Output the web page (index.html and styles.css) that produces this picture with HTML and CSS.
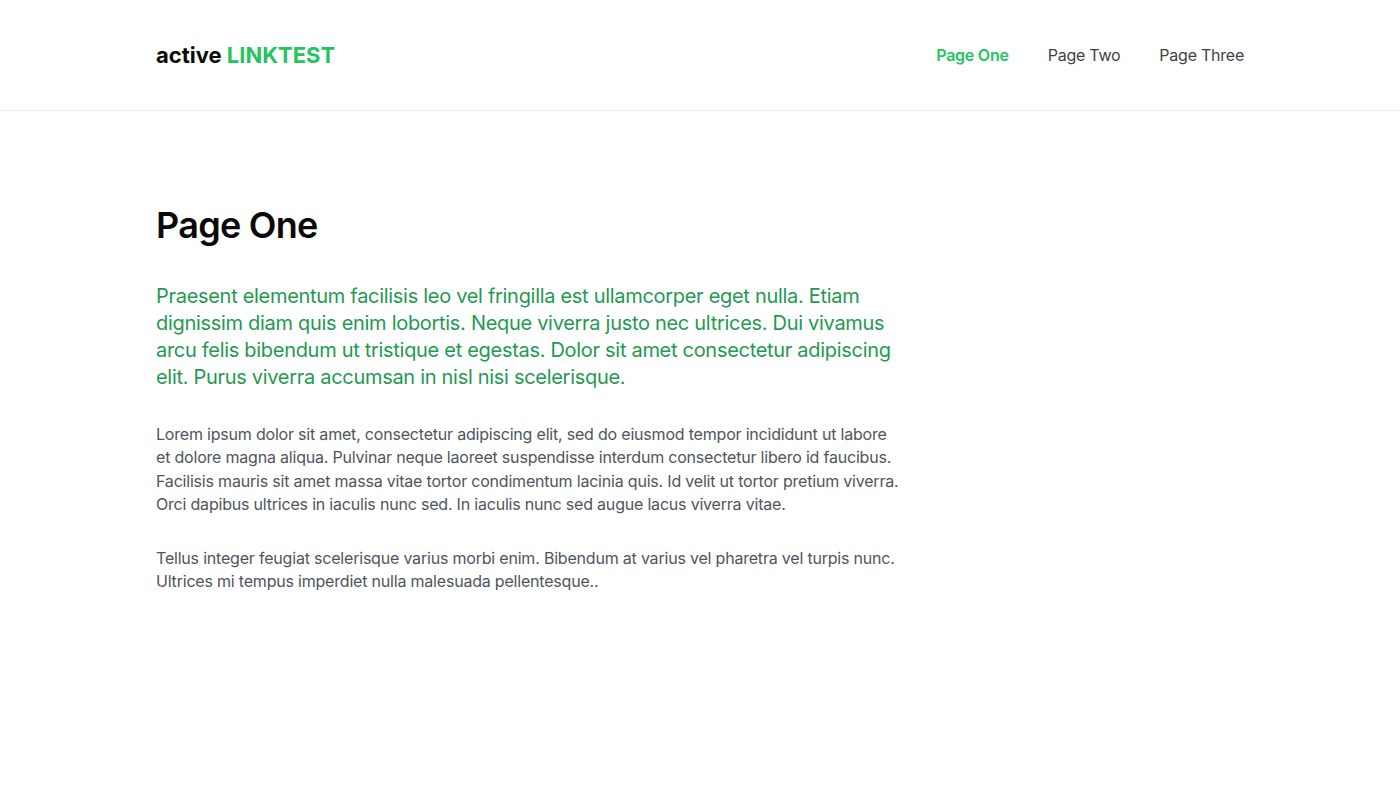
FILE: index.html
```html
<!DOCTYPE html>
<html lang="en">
<head>
<meta charset="utf-8">
<title>active LINKTEST</title>
<link rel="stylesheet" href="styles.css">
</head>
<body>
<header class="site-header">
  <div class="container header-inner">
    <a class="logo" href="#">active <span class="logo-accent">LINKTEST</span></a>
    <nav class="nav">
      <a class="nav-link is-active" href="#">Page One</a>
      <a class="nav-link" href="#">Page Two</a>
      <a class="nav-link" href="#">Page Three</a>
    </nav>
  </div>
</header>
<main class="container content">
  <h1 class="title">Page One</h1>
  <p class="lead">Praesent elementum facilisis leo vel fringilla est ullamcorper eget nulla. Etiam dignissim diam quis enim lobortis. Neque viverra justo nec ultrices. Dui vivamus arcu felis bibendum ut tristique et egestas. Dolor sit amet consectetur adipiscing elit. Purus viverra accumsan in nisl nisi scelerisque.</p>
  <p class="text">Lorem ipsum dolor sit amet, consectetur adipiscing elit, sed do eiusmod tempor incididunt ut labore et dolore magna aliqua. Pulvinar neque laoreet suspendisse interdum consectetur libero id faucibus. Facilisis mauris sit amet massa vitae tortor condimentum lacinia quis. Id velit ut tortor pretium viverra. Orci dapibus ultrices in iaculis nunc sed. In iaculis nunc sed augue lacus viverra vitae.</p>
  <p class="text">Tellus integer feugiat scelerisque varius morbi enim. Bibendum at varius vel pharetra vel turpis nunc. Ultrices mi tempus imperdiet nulla malesuada pellentesque..</p>
</main>
</body>
</html>
```

FILE: styles.css
```css
* { box-sizing: border-box; }
html, body { margin: 0; padding: 0; }
body {
  font-family: Inter, "Liberation Sans", sans-serif;
  background: #ffffff;
  color: #111;
}
a { text-decoration: none; }
.container {
  max-width: 1088px;
  margin: 0 auto;
}
.site-header {
  border-bottom: 1px solid #ececec;
}
.header-inner {
  height: 110px;
  display: flex;
  align-items: center;
  justify-content: space-between;
}
.logo {
  font-size: 22px;
  font-weight: 700;
  color: #0a0a0a;
  letter-spacing: 0;
}
.logo-accent { color: #22c55e; }
.nav {
  display: flex;
  gap: 39px;
}
.nav-link {
  font-size: 16px;
  color: #3f3f46;
  letter-spacing: -0.015em;
}
.nav-link.is-active {
  color: #22c55e;
  font-weight: 600;
}
.content {
  padding-top: 92px;
}
.title {
  margin: 0 0 36px;
  font-size: 36px;
  font-weight: 600;
  line-height: 44px;
  color: #0a0a0a;
  letter-spacing: -0.02em;
}
.lead {
  max-width: 746px;
  margin: 0 0 32px;
  font-size: 20px;
  line-height: 27px;
  color: #1f9a52;
  letter-spacing: -0.015em;
}
.text {
  max-width: 746px;
  margin: 0 0 31px;
  font-size: 16px;
  line-height: 23.3px;
  color: #50555d;
  letter-spacing: -0.0125em;
}
```
